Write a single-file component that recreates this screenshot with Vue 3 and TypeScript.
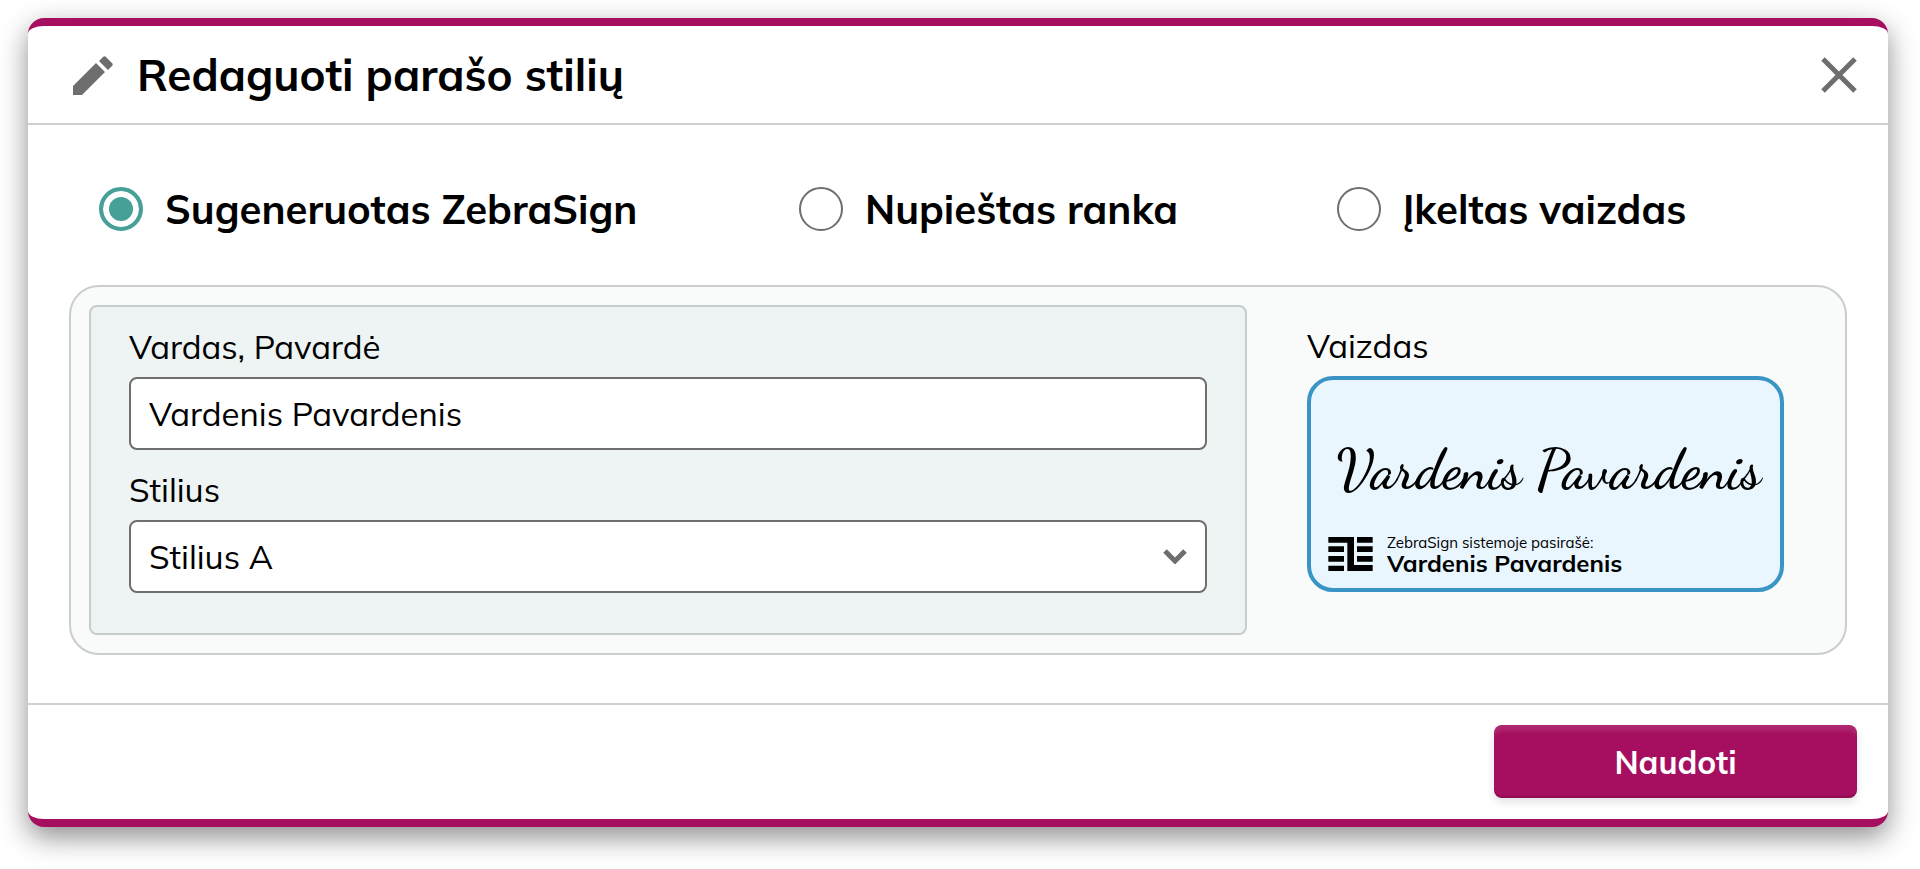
<script setup lang="ts">
import { ref } from 'vue'

type Source = 'generated' | 'drawn' | 'uploaded'

const sources: { value: Source; label: string }[] = [
  { value: 'generated', label: 'Sugeneruotas ZebraSign' },
  { value: 'drawn', label: 'Nupieštas ranka' },
  { value: 'uploaded', label: 'Įkeltas vaizdas' },
]
const styles = ['Stilius A', 'Stilius B', 'Stilius C']

const source = ref<Source>('generated')
const fullName = ref('Vardenis Pavardenis')
const style = ref(styles[0])
</script>

<template>
  <main class="page">
    <form class="dialog" role="dialog" aria-labelledby="dialog-title" @submit.prevent>
      <header class="header">
        <svg class="pencil" viewBox="0 0 40 40" aria-hidden="true">
          <path d="M0 31L23 8L32 17L9 40H0zM26 6L30 2Q31.500 .5 33 2L39 8Q40.500 9.500 39 11L35 15z" />
        </svg>
        <h1 id="dialog-title" class="title">Redaguoti parašo stilių</h1>
        <button class="close" type="button" aria-label="Uždaryti">
          <svg viewBox="0 0 36 36" aria-hidden="true">
            <path d="M2 2l32 32M34 2L2 34" />
          </svg>
        </button>
      </header>

      <section class="body">
        <div class="sources" role="radiogroup" aria-labelledby="dialog-title">
          <label v-for="item in sources" :key="item.value" class="source">
            <input v-model="source" class="radio" type="radio" name="source" :value="item.value" />
            <span>{{ item.label }}</span>
          </label>
        </div>

        <div class="editor">
          <div class="panel">
            <label class="label" for="full-name">Vardas, Pavardė</label>
            <input id="full-name" v-model="fullName" class="control" type="text" />
            <label class="label second" for="style">Stilius</label>
            <div class="select-wrap">
              <select id="style" v-model="style" class="control">
                <option v-for="name in styles" :key="name">{{ name }}</option>
              </select>
              <svg class="chevron" viewBox="0 0 24 15" aria-hidden="true">
                <path d="M2 2l10 10L22 2" />
              </svg>
            </div>
          </div>

          <div class="preview-column">
            <div class="label">Vaizdas</div>
            <div class="preview">
              <div class="signature">{{ fullName }}</div>
              <div class="stamp">
                <svg class="logo" viewBox="0 0 133 102" aria-hidden="true">
                  <path d="M0 0H77V84H133V102H57V17H0zM0 28H47V45H0zM0 57H47V74H0zM0 86H47V102H0zM86 0H133V17H86zM86 28H133V45H86zM86 57H133V74H86z" />
                </svg>
                <div class="stamp-text">
                  <span class="stamp-note">ZebraSign sistemoje pasirašė:</span>
                  <strong class="stamp-name">{{ fullName }}</strong>
                </div>
              </div>
            </div>
          </div>
        </div>
      </section>

      <footer class="footer">
        <button class="submit" type="submit">Naudoti</button>
      </footer>
    </form>
  </main>
</template>

<style>
body {
  margin: 0;
  background: #fff;
}
</style>

<style scoped>
* {
  box-sizing: border-box;
}

.page {
  padding: 18px 32px 42px 28px;
  font-family: Mulish, Muli, Lato, sans-serif;
  color: #000;
}

.dialog {
  border-top: 8px solid #a60f5f;
  border-bottom: 8px solid #a60f5f;
  border-radius: 16px;
  background: #fff;
  box-shadow: 0 10px 28px rgba(0, 0, 0, 0.45);
}

.header {
  display: flex;
  align-items: center;
  padding: 20px 31px 20px 45px;
  border-bottom: 2px solid #cdd1d2;
}

.pencil {
  width: 40px;
  height: 40px;
  fill: #6e6e6e;
}

.title {
  flex: 1;
  margin: 0 0 0 24px;
  font-size: 44px;
  line-height: 57px;
  font-weight: 700;
}

.close {
  display: flex;
  padding: 0;
  border: 0;
  background: none;
  cursor: pointer;
}

.close svg {
  width: 36px;
  height: 36px;
  fill: none;
  stroke: #6e6e6e;
  stroke-width: 5;
}

.body {
  padding: 62px 41px 48px;
}

.sources {
  display: grid;
  grid-template-columns: 700fr 538fr 510fr;
  margin-bottom: 54px;
  padding-left: 30px;
}

.source {
  display: flex;
  align-items: center;
  gap: 22px;
  font-size: 40px;
  line-height: 44px;
  font-weight: 700;
}

.radio {
  appearance: none;
  flex: none;
  width: 44px;
  height: 44px;
  margin: 0;
  border: 2px solid #6e6e6e;
  border-radius: 50%;
  background: #fff;
}

.radio:checked {
  border: 4px solid #46a097;
  background: #46a097;
  box-shadow: inset 0 0 0 6px #fff;
}

.editor {
  display: grid;
  grid-template-columns: minmax(0, 1158fr) minmax(0, 520fr);
  gap: 60px;
  padding: 18px;
  border: 2px solid #c9cdcc;
  border-radius: 30px;
  background: #f9fbfa;
}

.panel {
  padding: 20px 38px 40px;
  border: 2px solid #c7cccd;
  border-radius: 8px;
  background: #eef4f4;
}

.label {
  display: block;
  margin-bottom: 10px;
  font-size: 33px;
  line-height: 40px;
}

.second {
  margin-top: 20px;
}

.control {
  display: block;
  appearance: none;
  width: 100%;
  height: 73px;
  padding: 0 18px;
  border: 2px solid #6e6e6e;
  border-radius: 8px;
  background: #fff;
  color: #000;
  font-family: inherit;
  font-size: 33px;
}

.select-wrap {
  position: relative;
}

.chevron {
  position: absolute;
  top: 29px;
  right: 20px;
  width: 24px;
  height: 15px;
  fill: none;
  stroke: #6e6e6e;
  stroke-width: 5;
  pointer-events: none;
}

.preview-column {
  padding: 21px 43px 0 0;
}

.preview {
  padding: 52px 8px 14px 17px;
  border: 4px solid #3a95c6;
  border-radius: 26px;
  background: #e9f6fe;
}

.signature {
  height: 80px;
  padding-left: 8px;
  font-family: Satisfy, "Dancing Script", "Liberation Serif", cursive;
  font-size: 56px;
  line-height: 76px;
  font-weight: 600;
  white-space: nowrap;
}

.stamp {
  display: flex;
  align-items: center;
  gap: 14px;
  margin-top: 22px;
}

.logo {
  width: 45px;
  height: 34px;
}

.stamp-text {
  display: flex;
  flex-direction: column;
}

.stamp-note {
  font-size: 15px;
  line-height: 18px;
}

.stamp-name {
  font-size: 24px;
  line-height: 22px;
}

.footer {
  display: flex;
  justify-content: flex-end;
  padding: 20px 31px 21px;
  border-top: 2px solid #d0d2d3;
}

.submit {
  width: 363px;
  height: 73px;
  border: 0;
  border-radius: 8px;
  background: #a60f5f;
  box-shadow:
    0 4px 8px rgba(0, 0, 0, 0.12),
    inset 0 8px 4px -2px rgba(255, 255, 255, 0.1),
    inset 0 -2px 2px rgba(0, 0, 0, 0.16);
  color: #fff;
  font-family: inherit;
  font-size: 32px;
  font-weight: 700;
  cursor: pointer;
}
</style>
